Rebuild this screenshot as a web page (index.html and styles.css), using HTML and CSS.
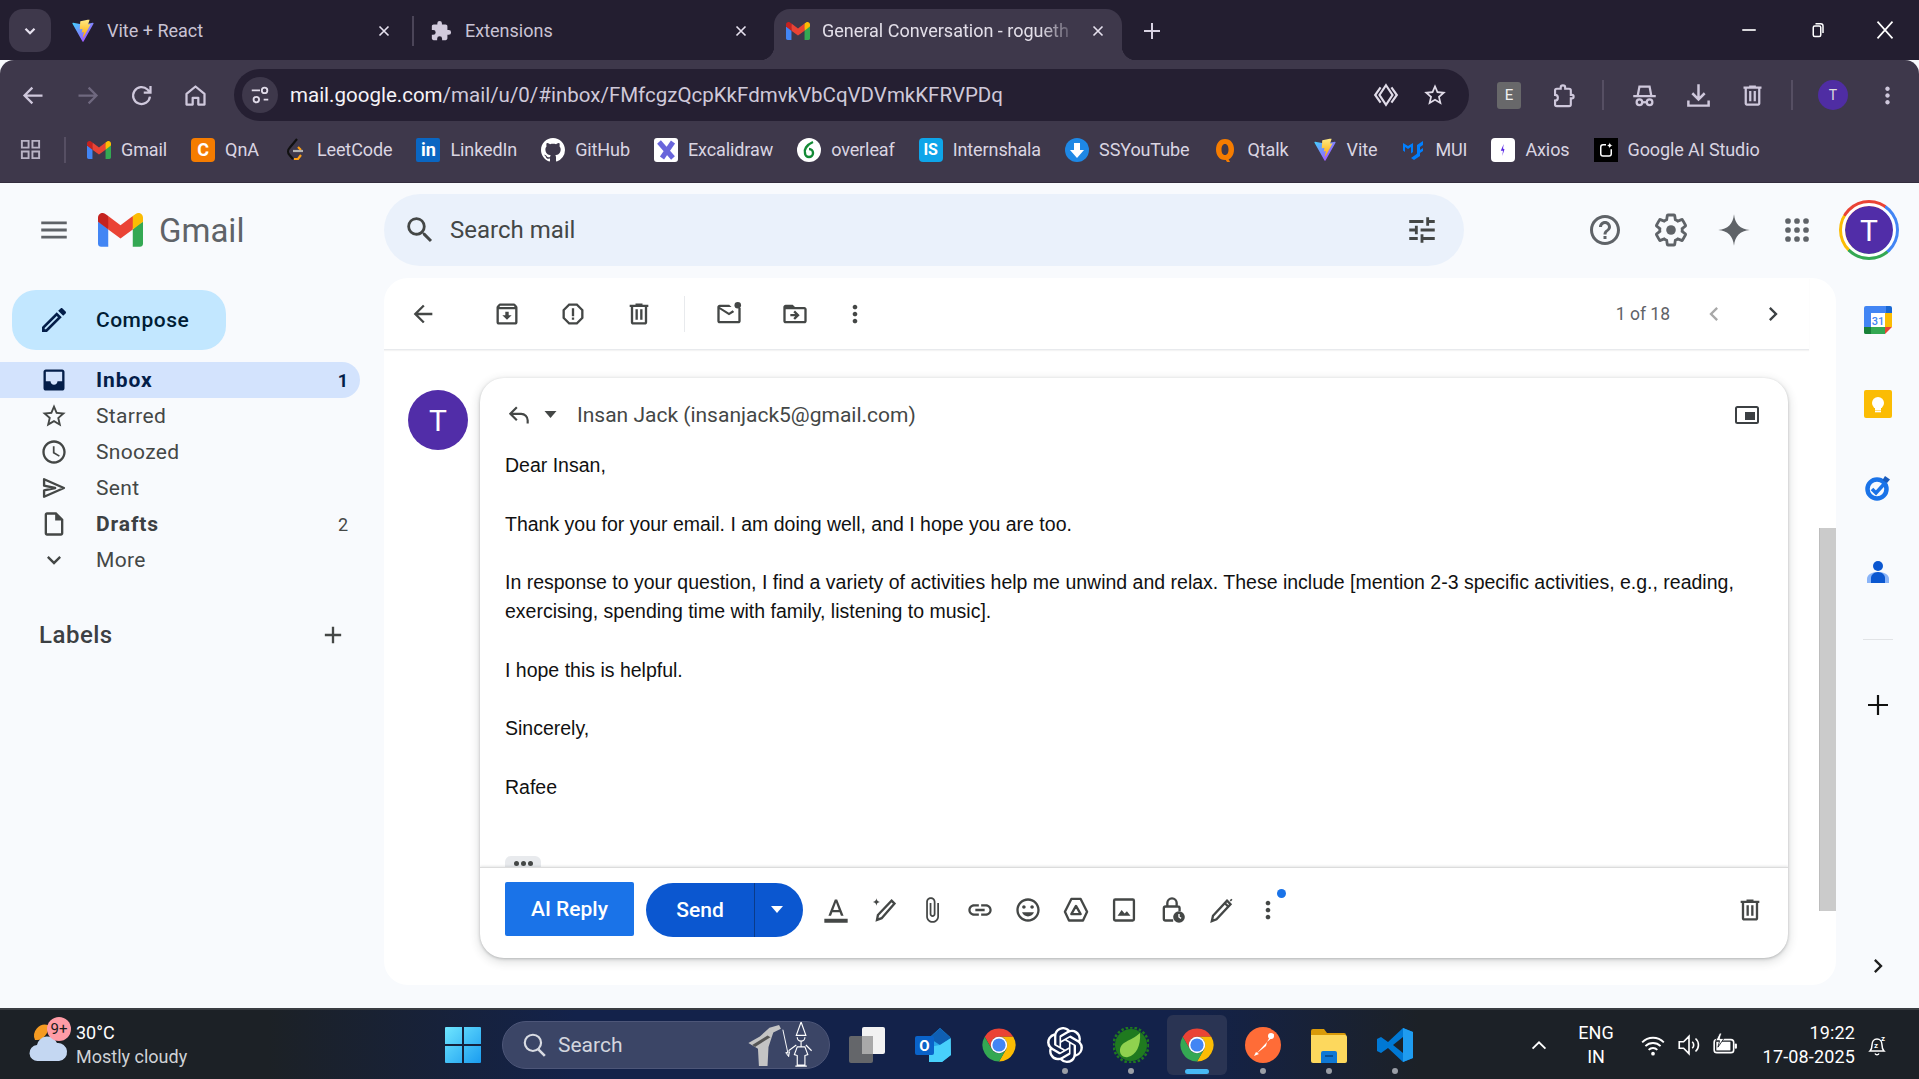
FILE: index.html
```html
<!DOCTYPE html>
<html lang="en">
<head>
<meta charset="utf-8">
<title>General Conversation</title>
<link rel="stylesheet" href="styles.css">
</head>
<body>
<svg class="sprite" width="0" height="0" aria-hidden="true">
  <defs>
    <linearGradient id="viteA" x1="0" y1="0" x2="1" y2="1"><stop offset="0" stop-color="#41d1ff"/><stop offset="1" stop-color="#bd34fe"/></linearGradient>
    <linearGradient id="viteB" x1="0" y1="0" x2="0" y2="1"><stop offset="0" stop-color="#ffea83"/><stop offset="1" stop-color="#ffa800"/></linearGradient>
    <linearGradient id="winG" x1="0" y1="0" x2="1" y2="1"><stop offset="0" stop-color="#6fe6ff"/><stop offset="1" stop-color="#1a9cf0"/></linearGradient>
    <symbol id="gm" viewBox="0 0 256 193">
      <path fill="#4285F4" d="M58.182 192.05V93.14L27.507 65.077 0 49.504v125.091c0 9.658 7.825 17.455 17.455 17.455h40.727Z"/>
      <path fill="#34A853" d="M197.818 192.05h40.727c9.659 0 17.455-7.826 17.455-17.455V49.505l-31.156 17.837-27.026 25.798v98.91Z"/>
      <path fill="#EA4335" d="m58.182 93.14-4.174-38.647 4.174-36.989L128 69.868l69.818-52.364 4.669 34.992-4.669 40.644L128 145.504z"/>
      <path fill="#FBBC04" d="M197.818 17.504V93.14L256 49.504V26.231c0-21.585-24.64-33.89-41.89-20.945l-16.292 12.218Z"/>
      <path fill="#C5221F" d="m0 49.504 26.759 20.07L58.182 93.14V17.504L41.89 5.286C24.61-7.66 0 4.646 0 26.23v23.273Z"/>
    </symbol>
    <symbol id="vite" viewBox="0 0 32 32">
      <path fill="url(#viteA)" d="M30 6.2 16.7 30a.8.8 0 0 1-1.4 0L2 6.2a.8.8 0 0 1 .8-1.1l12.9 2.3h.5l12.9-2.3A.8.8 0 0 1 30 6.2z"/>
      <path fill="url(#viteB)" d="M22.3 1.1 12.6 3a.4.4 0 0 0-.3.3l-.6 10.1c0 .3.2.5.4.4l2.7-.6c.3-.1.5.2.4.4l-.8 3.9c-.1.3.2.5.5.4l1.7-.5c.3-.1.5.2.5.5l-1.3 6.2c-.1.4.4.6.6.3l.2-.2 9.6-17.3-2.9.6c-.3 0-.5-.2-.4-.5l1.8-5.5c.1-.3-.1-.5-.4-.4z"/>
    </symbol>
    <symbol id="chrome" viewBox="0 0 24 24">
      <path fill="#ea4335" d="M12 6.5H21.53A11 11 0 0 0 2.47 6.5L7.24 14.75A5.5 5.5 0 0 1 12 6.5z"/>
      <path fill="#fbbc04" d="M21.53 6.5H12A5.5 5.5 0 0 1 16.76 14.75L12 23A11 11 0 0 0 21.53 6.5z"/>
      <path fill="#34a853" d="M2.47 6.5 7.24 14.75A5.5 5.5 0 0 0 16.76 14.75L12 23A11 11 0 0 1 2.47 6.5z"/>
      <circle cx="12" cy="12" r="5.5" fill="#fff"/><circle cx="12" cy="12" r="4.4" fill="#4285f4"/>
    </symbol>
    <symbol id="more" viewBox="0 0 24 24"><path d="M12 8c1.1 0 2-.9 2-2s-.9-2-2-2-2 .9-2 2 .9 2 2 2zm0 2c-1.1 0-2 .9-2 2s.9 2 2 2 2-.9 2-2-.9-2-2-2zm0 6c-1.1 0-2 .9-2 2s.9 2 2 2 2-.9 2-2-.9-2-2-2z"/></symbol>
    <symbol id="trash" viewBox="0 0 24 24"><path d="M15 4V3H9v1H4v2h1v13c0 1.1.9 2 2 2h10c1.1 0 2-.9 2-2V6h1V4h-5zm2 15H7V6h10v13zM9 8h2v9H9zm4 0h2v9h-2z"/></symbol>
    <symbol id="x" viewBox="0 0 24 24"><path d="M6 6l12 12M18 6 6 18" fill="none" stroke="currentColor" stroke-width="2.2"/></symbol>
  </defs>
</svg>

<div class="tabstrip">
  <button class="tablist"><svg class="i18" viewBox="0 0 24 24"><path d="M6 9l6 6 6-6" fill="none" stroke="currentColor" stroke-width="3"/></svg></button>
  <div class="tab tab-a">
    <svg class="fav"><use href="#vite"/></svg><span class="tab-title">Vite + React</span>
    <svg class="tab-x"><use href="#x"/></svg>
  </div>
  <i class="tab-sep"></i>
  <div class="tab tab-b">
    <svg class="fav puzzle" viewBox="0 0 24 24"><path d="M20.5 11H19V7c0-1.1-.9-2-2-2h-4V3.5a2.5 2.5 0 0 0-5 0V5H4c-1.1 0-2 .9-2 2v3.8h1.5a2.7 2.7 0 0 1 0 5.4H2V20c0 1.1.9 2 2 2h3.8v-1.5a2.7 2.7 0 0 1 5.4 0V22H17c1.1 0 2-.9 2-2v-4h1.5a2.5 2.5 0 0 0 0-5z"/></svg><span class="tab-title">Extensions</span>
    <svg class="tab-x"><use href="#x"/></svg>
  </div>
  <div class="tab tab-active">
    <svg class="fav"><use href="#gm"/></svg><span class="tab-title fade">General Conversation - rogueth</span>
    <svg class="tab-x"><use href="#x"/></svg>
  </div>
  <svg class="newtab" viewBox="0 0 24 24"><path d="M12 4v16M4 12h16" fill="none" stroke="currentColor" stroke-width="2"/></svg>
  <div class="winctl">
    <span class="wbtn"><svg class="i18" viewBox="0 0 24 24"><path d="M3 12h18" stroke="#fff" stroke-width="2.2"/></svg></span>
    <span class="wbtn"><svg class="i18" viewBox="0 0 24 24"><path d="M7 8.5a2 2 0 0 1 2-2h6a2 2 0 0 1 2 2v10a2 2 0 0 1-2 2H9a2 2 0 0 1-2-2z M10 3.500h7a3 3 0 0 1 3 3V16" fill="none" stroke="#fff" stroke-width="2"/></svg></span>
    <span class="wbtn"><svg class="i18 wx" viewBox="0 0 24 24"><path d="M3 2l18 20M21 2 3 22" fill="none" stroke="#fff" stroke-width="2"/></svg></span>
  </div>
</div>

<div class="chrome">
  <div class="navrow">
    <span class="cbtn"><svg class="ci" viewBox="0 0 24 24"><path d="M20 12H5M11 5l-7 7 7 7" fill="none" stroke="currentColor" stroke-width="2"/></svg></span>
    <span class="cbtn dim"><svg class="ci" viewBox="0 0 24 24"><path d="M4 12h15M13 5l7 7-7 7" fill="none" stroke="currentColor" stroke-width="2"/></svg></span>
    <span class="cbtn"><svg class="ci" viewBox="0 0 24 24"><path d="M19.500 13a7.500 7.500 0 1 1-2.200-6.300L20 9.500M20 3.500v6h-6" fill="none" stroke="currentColor" stroke-width="2"/></svg></span>
    <span class="cbtn"><svg class="ci" viewBox="0 0 24 24"><path d="M4 10.500 12 4l8 6.500V20h-5.500v-6h-5v6H4z" fill="none" stroke="currentColor" stroke-width="2" stroke-linejoin="round"/></svg></span>
    <div class="omni">
      <span class="omni-site"><svg class="i22" viewBox="0 0 24 24"><path d="M3 7h9M16 17h5" fill="none" stroke="currentColor" stroke-width="2"/><circle cx="17" cy="7" r="3" fill="none" stroke="currentColor" stroke-width="2"/><circle cx="8" cy="17" r="3" fill="none" stroke="currentColor" stroke-width="2"/></svg></span>
      <span class="url"><b>mail.google.com</b>/mail/u/0/#inbox/FMfcgzQcpKkFdmvkVbCqVDVmkKFRVPDq</span>
      <svg class="omni-lens" viewBox="0 0 24 24"><path d="M12 3l6 9-6 9-6-9z M7 5 2 12l5 7 M17 5l5 7-5 7" fill="none" stroke="currentColor" stroke-width="2"/></svg>
      <svg class="omni-star" viewBox="0 0 24 24"><path d="M22 9.240l-7.190-.62L12 2 9.190 8.630 2 9.240l5.460 4.730L5.820 21 12 17.270 18.180 21l-1.630-7.030L22 9.240zM12 15.400l-3.760 2.270 1-4.280-3.320-2.880 4.380-.38L12 6.100l1.710 4.040 4.380.38-3.320 2.880 1 4.280L12 15.400z"/></svg>
    </div>
    <span class="cbtn c-first"><span class="ext-e">E</span></span>
    <span class="cbtn"><svg class="ci" viewBox="0 0 24 24"><path d="M6 6h3.500V5a2 2 0 0 1 4 0v1H17a1.500 1.500 0 0 1 1.500 1.500v4h1a1.500 1.500 0 0 1 0 3h-1V20a1.500 1.500 0 0 1-1.500 1.500H6A1.500 1.500 0 0 1 4.500 20v-3.500a2.500 2.500 0 0 0 0-5V7.500A1.500 1.500 0 0 1 6 6z" fill="none" stroke="currentColor" stroke-width="1.900"/></svg></span>
    <i class="csep"></i>
    <span class="cbtn"><svg class="ci" viewBox="0 0 24 24"><path d="M2 12.500h20M6 12l1.500-8h9l1.500 8" fill="none" stroke="currentColor" stroke-width="2"/><circle cx="7.500" cy="18" r="2.500" fill="none" stroke="currentColor" stroke-width="2"/><circle cx="16.500" cy="18" r="2.500" fill="none" stroke="currentColor" stroke-width="2"/><path d="M10 18h4" stroke="currentColor" stroke-width="2"/></svg></span>
    <span class="cbtn"><svg class="ci" viewBox="0 0 24 24"><path d="M12 2v13M6.500 10l5.500 5.500 5.500-5.500M3 16.500V21h18v-4.500" fill="none" stroke="currentColor" stroke-width="2.200"/></svg></span>
    <span class="cbtn"><svg class="ci fillc"><use href="#trash"/></svg></span>
    <i class="csep"></i>
    <span class="cbtn"><span class="cavatar">T</span></span>
    <span class="cbtn"><svg class="ci fillc"><use href="#more"/></svg></span>
  </div>
  <div class="bookmarks">
    <svg class="bm-apps" viewBox="0 0 24 24"><path d="M3 3h7v7H3zM14 3h7v7h-7zM3 14h7v7H3zM14 14h7v7h-7z" fill="none" stroke="currentColor" stroke-width="2"/></svg>
    <i class="bm-sep"></i>
    <a class="bm"><svg class="bm-ic gm-small"><use href="#gm"/></svg>Gmail</a>
    <a class="bm"><span class="bm-ic tile t-orange">C</span>QnA</a>
    <a class="bm"><svg class="bm-ic" viewBox="0 0 24 24"><path d="M14 1 6.500 10a5 5 0 0 0 0 7l3.500 4" fill="none" stroke="#111" stroke-width="2.200"/><path d="M15 9l3 3M18 17l-3 4h-4" fill="none" stroke="#ffa116" stroke-width="2.200"/><path d="M10 13h10" stroke="#b3b3b3" stroke-width="2.200"/></svg>LeetCode</a>
    <a class="bm"><span class="bm-ic tile t-li">in</span>LinkedIn</a>
    <a class="bm"><svg class="bm-ic" viewBox="0 0 16 16"><path fill="#fff" d="M8 0C3.580 0 0 3.580 0 8c0 3.540 2.290 6.530 5.470 7.590.4.070.55-.17.55-.38 0-.19-.01-.82-.01-1.490-2.010.37-2.530-.49-2.690-.94-.09-.23-.48-.94-.82-1.130-.28-.15-.68-.52-.01-.53.63-.01 1.080.58 1.230.82.72 1.210 1.870.87 2.330.66.07-.52.28-.87.51-1.070-1.780-.2-3.640-.89-3.640-3.950 0-.87.31-1.590.82-2.150-.08-.2-.36-1.020.08-2.120 0 0 .67-.21 2.200.82.64-.18 1.320-.27 2-.27s1.360.09 2 .27c1.530-1.040 2.200-.82 2.200-.82.44 1.100.16 1.920.08 2.120.51.56.82 1.270.82 2.150 0 3.070-1.870 3.750-3.650 3.950.29.25.54.73.54 1.480 0 1.070-.01 1.930-.01 2.200 0 .21.15.46.55.38A8.013 8.013 0 0 0 16 8c0-4.420-3.580-8-8-8z"/></svg>GitHub</a>
    <a class="bm"><svg class="bm-ic" viewBox="0 0 24 24"><rect width="24" height="24" rx="3" fill="#fff"/><path d="M5 4l14 16M19 4 8 20" fill="none" stroke="#6965db" stroke-width="5"/></svg>Excalidraw</a>
    <a class="bm"><svg class="bm-ic" viewBox="0 0 24 24"><circle cx="12" cy="12" r="12" fill="#fff"/><path d="M16 4C9 7 7 12 8 15a4 4 0 1 0 4-4" fill="none" stroke="#138a36" stroke-width="2.400"/></svg>overleaf</a>
    <a class="bm"><span class="bm-ic tile t-is">IS</span>Internshala</a>
    <a class="bm"><svg class="bm-ic" viewBox="0 0 24 24"><circle cx="12" cy="12" r="12" fill="#1e88e5"/><path d="M9 5h6v7h4l-7 8-7-8h4z" fill="#fff"/></svg>SSYouTube</a>
    <a class="bm"><svg class="bm-ic" viewBox="0 0 24 24"><path d="M12 1c6 0 9 5 9 10.500S18 22 12 22 3 17 3 11.500 6 1 12 1zm0 5c-2.500 0-3.500 2.500-3.500 5.500S9.500 17 12 17s3.500-2.500 3.500-5.500S14.500 6 12 6z" fill="#f57c00"/><path d="M11 19l3 5h3l-3-6z" fill="#f57c00"/></svg>Qtalk</a>
    <a class="bm"><svg class="bm-ic"><use href="#vite"/></svg>Vite</a>
    <a class="bm"><svg class="bm-ic" viewBox="0 0 24 24"><path d="M2 5l5 3 5-3v9l-2 1.500V9L7 11 4 9v5L2 12.500zM22 3v4l-3 2v9l-6 4-3-2 5-3.500 1-1V7l6-4zM22 10v3l-3 2v-3z" fill="#007fff"/></svg>MUI</a>
    <a class="bm"><span class="bm-ic tile t-ax"><svg class="i18" viewBox="0 0 24 24"><path d="M13 4 9 13h3l-1 7 3-9-2-1z" fill="#5a29e4"/></svg></span>Axios</a>
    <a class="bm"><span class="bm-ic tile t-ai"><svg class="i18" viewBox="0 0 24 24"><path d="M12 5H8a3 3 0 0 0-3 3v9a3 3 0 0 0 3 3h8a3 3 0 0 0 3-3v-6" fill="none" stroke="#fff" stroke-width="2"/><path d="M17 2c.3 2.500 1.500 3.700 4 4-2.500.3-3.700 1.500-4 4-.3-2.500-1.500-3.700-4-4 2.500-.3 3.700-1.500 4-4z" fill="#fff"/></svg></span>Google AI Studio</a>
  </div>
</div>

<div class="gmail">
  <header class="g-head">
    <div class="brand">
      <svg class="g-ic menu" viewBox="0 0 24 24"><path d="M3 18h18v-2H3v2zm0-5h18v-2H3v2zm0-7v2h18V6H3z"/></svg>
      <svg class="logo"><use href="#gm"/></svg>
      <span class="wordmark">Gmail</span>
    </div>
    <div class="search">
      <svg class="g-ic search-ic" viewBox="0 0 24 24"><path d="M15.500 14h-.79l-.28-.27A6.471 6.471 0 0 0 16 9.500 6.500 6.500 0 1 0 9.500 16c1.610 0 3.090-.59 4.230-1.570l.27.28v.79l5 4.990L20.490 19l-4.990-5zm-6 0C7.010 14 5 11.990 5 9.500S7.010 5 9.500 5 14 7.010 14 9.500 11.990 14 9.500 14z"/></svg>
      <span class="search-text">Search mail</span>
      <svg class="g-ic tune" viewBox="0 0 24 24"><path d="M3 17v2h6v-2H3zM3 5v2h10V5H3zm10 16v-2h8v-2h-8v-2h-2v6h2zM7 9v2H3v2h4v2h2V9H7zm14 4v-2H11v2h10zm-6-4h2V7h4V5h-4V3h-2v6z"/></svg>
    </div>
    <div class="head-actions">
      <svg class="ha" viewBox="0 0 24 24"><path d="M11 18h2v-2h-2v2zm1-16C6.480 2 2 6.480 2 12s4.480 10 10 10 10-4.480 10-10S17.520 2 12 2zm0 18c-4.410 0-8-3.590-8-8s3.590-8 8-8 8 3.590 8 8-3.590 8-8 8zm0-14c-2.210 0-4 1.790-4 4h2c0-1.100.9-2 2-2s2 .9 2 2c0 2-3 1.750-3 5h2c0-2.250 3-2.500 3-5 0-2.210-1.790-4-4-4z"/></svg>
      <svg class="ha" viewBox="0 0 24 24"><path fill="none" stroke="currentColor" stroke-width="1.900" d="M19.430 12.980c.04-.32.07-.64.07-.98s-.03-.66-.07-.98l2.110-1.650c.19-.15.24-.42.12-.64l-2-3.460c-.12-.22-.39-.3-.61-.22l-2.490 1c-.52-.4-1.080-.73-1.690-.98l-.38-2.650C14.460 2.180 14.250 2 14 2h-4c-.25 0-.46.18-.49.420l-.38 2.650c-.61.25-1.170.59-1.690.98l-2.490-1c-.23-.09-.49 0-.61.22l-2 3.460c-.13.22-.07.49.12.64l2.110 1.650c-.04.32-.07.65-.07.98s.03.66.07.98l-2.110 1.650c-.19.15-.24.42-.12.64l2 3.460c.12.22.39.3.61.22l2.490-1c.52.4 1.080.73 1.690.98l.38 2.650c.03.24.24.42.49.42h4c.25 0 .46-.18.49-.42l.38-2.650c.61-.25 1.170-.59 1.690-.98l2.490 1c.23.09.49 0 .61-.22l2-3.460c.12-.22.07-.49-.12-.64l-2.110-1.650z"/><circle cx="12" cy="12" r="3.200"/></svg>
      <svg class="ha" viewBox="0 0 24 24"><path d="M12 1.500C12.700 8 16 11.300 22.500 12 16 12.700 12.700 16 12 22.500 11.300 16 8 12.700 1.500 12 8 11.300 11.300 8 12 1.500z"/></svg>
      <svg class="ha" viewBox="0 0 24 24"><g><circle cx="6" cy="6" r="1.900"/><circle cx="12" cy="6" r="1.900"/><circle cx="18" cy="6" r="1.900"/><circle cx="6" cy="12" r="1.900"/><circle cx="12" cy="12" r="1.900"/><circle cx="18" cy="12" r="1.900"/><circle cx="6" cy="18" r="1.900"/><circle cx="12" cy="18" r="1.900"/><circle cx="18" cy="18" r="1.900"/></g></svg>
      <div class="ring"><span class="ring-in">T</span></div>
    </div>
  </header>

  <div class="g-body">
    <aside class="side">
      <button class="compose"><svg class="g-ic compose-ic" viewBox="0 0 24 24"><path d="M3 17.250V21h3.750L17.810 9.940l-3.750-3.750L3 17.250zM5.920 19H5v-.92l9.060-9.060.92.92L5.920 19zM20.710 5.630l-2.340-2.340c-.2-.2-.45-.29-.71-.29s-.51.1-.7.29l-1.830 1.830 3.750 3.750 1.830-1.830c.39-.39.39-1.020 0-1.410z"/></svg>Compose</button>
      <nav class="nav">
        <a class="nav-row active"><svg class="g-ic" viewBox="0 0 24 24"><path d="M19 3H5c-1.100 0-2 .9-2 2v14c0 1.100.9 2 2 2h14c1.100 0 2-.9 2-2V5c0-1.100-.9-2-2-2zm0 10h-4c0 1.660-1.340 3-3 3s-3-1.340-3-3H5V5h14v8z"/></svg><span class="nav-label">Inbox</span><span class="count">1</span></a>
        <a class="nav-row"><svg class="g-ic" viewBox="0 0 24 24"><path d="M22 9.240l-7.190-.62L12 2 9.190 8.630 2 9.240l5.460 4.730L5.820 21 12 17.270 18.180 21l-1.630-7.030L22 9.240zM12 15.400l-3.760 2.270 1-4.280-3.320-2.880 4.380-.38L12 6.100l1.710 4.040 4.380.38-3.320 2.880 1 4.280L12 15.400z"/></svg><span class="nav-label">Starred</span></a>
        <a class="nav-row"><svg class="g-ic" viewBox="0 0 24 24"><path d="M11.990 2C6.470 2 2 6.480 2 12s4.470 10 9.990 10C17.520 22 22 17.520 22 12S17.520 2 11.990 2zM12 20c-4.420 0-8-3.580-8-8s3.580-8 8-8 8 3.580 8 8-3.580 8-8 8zm.5-13H11v6l5.250 3.150.75-1.230-4.500-2.670z"/></svg><span class="nav-label">Snoozed</span></a>
        <a class="nav-row"><svg class="g-ic" viewBox="0 0 24 24"><path d="M3.500 4.500 20.500 12 3.500 19.500V14L13 12 3.500 10z" fill="none" stroke="currentColor" stroke-width="2" stroke-linejoin="round"/></svg><span class="nav-label">Sent</span></a>
        <a class="nav-row strong"><svg class="g-ic" viewBox="0 0 24 24"><path d="M14 2H6c-1.100 0-2 .9-2 2v16c0 1.100.9 2 2 2h12c1.100 0 2-.9 2-2V8l-6-6zm4 18H6V4h7v5h5v11z"/></svg><span class="nav-label">Drafts</span><span class="count light">2</span></a>
        <a class="nav-row"><svg class="g-ic" viewBox="0 0 24 24"><path d="M16.590 8.590L12 13.170 7.410 8.590 6 10l6 6 6-6z"/></svg><span class="nav-label">More</span></a>
      </nav>
      <div class="labels"><span>Labels</span><svg class="g-ic" viewBox="0 0 24 24"><path d="M19 13h-6v6h-2v-6H5v-2h6V5h2v6h6v2z"/></svg></div>
    </aside>

    <main class="card">
      <div class="mail-tools">
        <span class="mt back"><svg class="t-ic" viewBox="0 0 24 24"><path d="M20 11H7.830l5.590-5.590L12 4l-8 8 8 8 1.410-1.410L7.830 13H20v-2z"/></svg></span>
        <span class="mt"><svg class="t-ic" viewBox="0 0 24 24"><path d="M20.540 5.230l-1.390-1.680C18.880 3.210 18.470 3 18 3H6c-.47 0-.88.21-1.160.55L3.460 5.230C3.170 5.570 3 6.020 3 6.500V19c0 1.100.9 2 2 2h14c1.100 0 2-.9 2-2V6.500c0-.48-.17-.93-.46-1.270zM6.240 5h11.520l.83 1H5.420l.82-1zM5 19V8h14v11H5zm8.450-9h-2.900v3H8l4 4 4-4h-2.550z"/></svg></span>
        <span class="mt"><svg class="t-ic" viewBox="0 0 24 24"><path d="M15.730 3H8.270L3 8.270v7.460L8.270 21h7.460L21 15.730V8.270L15.730 3zM19 14.900L14.900 19H9.100L5 14.900V9.100L9.100 5h5.800L19 9.100v5.800zM11 7h2v7h-2zm0 8h2v2h-2z"/></svg></span>
        <span class="mt"><svg class="t-ic"><use href="#trash"/></svg></span>
        <i class="mt-sep"></i>
        <span class="mt"><svg class="t-ic" viewBox="0 0 24 24"><path d="M20 6.830V18H4V8l8 5 4.500-2.810-1.400-1.400L12 11 4 6h10.170l-2-2H4c-1.100 0-2 .9-2 2v12c0 1.100.9 2 2 2h16c1.100 0 2-.9 2-2V6.830h-2z"/><circle cx="19.500" cy="4.500" r="2.800"/></svg></span>
        <span class="mt"><svg class="t-ic" viewBox="0 0 24 24"><path d="M20 6h-8l-2-2H4c-1.100 0-2 .9-2 2v12c0 1.100.9 2 2 2h16c1.100 0 2-.9 2-2V8c0-1.100-.9-2-2-2zm0 12H4V8h16v10zm-8.010-9l-1.410 1.410L12.160 12H8v2h4.160l-1.590 1.590L11.990 17 16 13.010 11.990 9z"/></svg></span>
        <span class="mt mt-more"><svg class="t-ic"><use href="#more"/></svg></span>
        <span class="pager">1 of 18</span>
        <svg class="t-ic pg-prev" viewBox="0 0 24 24"><path d="M15.410 7.410L14 6l-6 6 6 6 1.410-1.410L10.830 12z"/></svg>
        <svg class="t-ic pg-next" viewBox="0 0 24 24"><path d="M10 6L8.590 7.410 13.170 12l-4.580 4.590L10 18l6-6z"/></svg>
      </div>
      <div class="card-row">
        <div class="thread">
          <span class="msg-avatar">T</span>
          <section class="composer">
            <div class="reply-head">
              <svg class="rh-ic" viewBox="0 0 24 24"><path d="M20 19v-3c0-3.300-2.700-6-6-6H4M10 4l-6 6 6 6" fill="none" stroke="currentColor" stroke-width="2"/></svg>
              <svg class="rh-caret" viewBox="0 0 12 7"><path d="M0 0h12L6 7z"/></svg>
              <span class="rh-to">Insan Jack (insanjack5@gmail.com)</span>
              <svg class="rh-pop" viewBox="0 0 24 18"><rect x="1" y="1" width="22" height="16" rx="1.500" fill="none" stroke="currentColor" stroke-width="2"/><rect x="10" y="6" width="10" height="8"/></svg>
            </div>
            <div class="reply-body">
              <p>Dear Insan,</p>
              <p>Thank you for your email. I am doing well, and I hope you are too.</p>
              <p>In response to your question, I find a variety of activities help me unwind and relax. These include [mention 2-3 specific activities, e.g., reading, exercising, spending time with family, listening to music].</p>
              <p>I hope this is helpful.</p>
              <p>Sincerely,</p>
              <p>Rafee</p>
              <span class="trim"><i></i><i></i><i></i></span>
            </div>
            <div class="reply-foot">
              <button class="ai-btn">AI Reply</button>
              <button class="send-btn">Send</button><button class="send-more"><svg viewBox="0 0 12 7"><path d="M0 0h12L6 7z"/></svg></button>
              <span class="fi fi-first"><svg class="f-ic" viewBox="0 0 24 24"><path d="M11 3 5.500 17h2.250l1.120-3h6.250l1.120 3h2.250L13 3h-2zm-1.380 9L12 5.670 14.380 12H9.620zM2 19.500h20V23H2z"/></svg></span>
              <span class="fi"><svg class="f-ic" viewBox="0 0 24 24"><path d="M5.500 2c.3 2 1.200 2.900 3 3.200-1.800.3-2.700 1.200-3 3.200-.3-2-1.200-2.900-3-3.200 1.800-.3 2.700-1.200 3-3.200z"/><path d="M18.500 4 21 6.500 10 19l-4 1.500.8-4.200z" fill="none" stroke="currentColor" stroke-width="2"/></svg></span>
              <span class="fi"><svg class="f-ic" viewBox="0 0 24 24"><path d="M16.500 6v11.500c0 2.210-1.790 4-4 4s-4-1.790-4-4V5c0-1.380 1.120-2.500 2.500-2.500s2.500 1.120 2.500 2.500v10.500c0 .55-.45 1-1 1s-1-.45-1-1V6H10v9.500c0 1.380 1.120 2.500 2.500 2.500s2.500-1.120 2.500-2.500V5c0-2.210-1.790-4-4-4S7 2.790 7 5v12.500c0 3.040 2.460 5.500 5.500 5.500s5.500-2.460 5.500-5.500V6h-1.500z"/></svg></span>
              <span class="fi"><svg class="f-ic" viewBox="0 0 24 24"><path d="M3.900 12c0-1.710 1.390-3.100 3.100-3.100h4V7H7c-2.760 0-5 2.240-5 5s2.240 5 5 5h4v-1.900H7c-1.710 0-3.100-1.390-3.100-3.100zM8 13h8v-2H8v2zm9-6h-4v1.900h4c1.710 0 3.100 1.390 3.100 3.100s-1.390 3.100-3.100 3.100h-4V17h4c2.760 0 5-2.240 5-5s-2.240-5-5-5z"/></svg></span>
              <span class="fi"><svg class="f-ic" viewBox="0 0 24 24"><path d="M11.990 2C6.470 2 2 6.480 2 12s4.470 10 9.990 10C17.520 22 22 17.520 22 12S17.520 2 11.990 2zM12 20c-4.420 0-8-3.580-8-8s3.580-8 8-8 8 3.580 8 8-3.580 8-8 8zm3.500-9c.83 0 1.500-.67 1.500-1.500S16.330 8 15.500 8 14 8.670 14 9.500s.67 1.500 1.500 1.500zm-7 0c.83 0 1.500-.67 1.500-1.500S9.330 8 8.500 8 7 8.670 7 9.500 7.670 11 8.500 11zm3.500 6.500c2.330 0 4.310-1.460 5.110-3.500H6.890c.8 2.040 2.780 3.500 5.110 3.500z"/></svg></span>
              <span class="fi"><svg class="f-ic" viewBox="0 0 24 24"><path d="M8 2.500h8l5.500 11-3.500 7.500H6l-3.500-7.500z M12 8.500 16 15.500H8z" fill="none" stroke="currentColor" stroke-width="2" stroke-linejoin="round"/></svg></span>
              <span class="fi"><svg class="f-ic" viewBox="0 0 24 24"><rect x="3.500" y="3" width="17" height="18" rx="1" fill="none" stroke="currentColor" stroke-width="2"/><path d="M6.500 17l3.500-5 2.500 3 2-2 3 4z"/></svg></span>
              <span class="fi"><svg class="f-ic" viewBox="0 0 24 24"><path d="M8 9V6a4 4 0 0 1 8 0v3M13 21H6.500A1.500 1.500 0 0 1 5 19.500v-9A1.500 1.500 0 0 1 6.500 9h10.500a1.500 1.500 0 0 1 1.500 1.500V13" fill="none" stroke="currentColor" stroke-width="2"/><circle cx="18" cy="18" r="5"/><path d="M18 15.500V18l1.800 1.200" stroke="#fff" stroke-width="1.200" fill="none"/></svg></span>
              <span class="fi"><svg class="f-ic" viewBox="0 0 24 24"><path d="M18 4 21 7 9 20l-4 1.500 1-4.500zM16 6l3 3M21 3l1 1" fill="none" stroke="currentColor" stroke-width="2"/></svg></span>
              <span class="fi fi-dot"><svg class="f-ic"><use href="#more"/></svg><i class="blue-dot"></i></span>
              <span class="fi fi-trash"><svg class="f-ic"><use href="#trash"/></svg></span>
            </div>
          </section>
        </div>
        <div class="scroll"><i class="thumb"></i></div>
      </div>
    </main>

    <aside class="rail">
      <span class="rail-slot"><svg class="rail-ic" viewBox="0 0 28 28"><path fill="#4285f4" d="M2 0h20v7H7v14H0V2a2 2 0 0 1 2-2z"/><path fill="#1967d2" d="M22 0h4a2 2 0 0 1 2 2v5h-6z"/><path fill="#fbbc04" d="M21 7h7v14h-7z"/><path fill="#34a853" d="M7 21h14v7H2a2 2 0 0 1-2-2v-5z"/><path fill="#188038" d="M0 21h7v7H2a2 2 0 0 1-2-2z"/><path fill="#ea4335" d="M21 21h7l-7 7z"/><rect x="7" y="7" width="14" height="14" fill="#fff"/><text x="14" y="18.500" class="cal-num">31</text></svg></span>
      <span class="rail-slot"><svg class="rail-ic" viewBox="0 0 28 28"><rect width="28" height="28" rx="2" fill="#fbbc04"/><circle cx="14" cy="13" r="6" fill="#fff"/><rect x="11" y="18" width="6" height="2" fill="#fff"/><rect x="11" y="20.500" width="6" height="1.800" fill="#fff"/></svg></span>
      <span class="rail-slot"><svg class="rail-ic" viewBox="0 0 28 28"><circle cx="13" cy="15" r="9.500" fill="none" stroke="#1a73e8" stroke-width="4.500"/><path d="M8 15l4 4 9-10" fill="none" stroke="#1a73e8" stroke-width="3.600"/><path d="M21 2l5 3.500-3 3.500-4.500-3z" fill="#185abc"/></svg></span>
      <span class="rail-slot"><svg class="rail-ic" viewBox="0 0 28 28"><circle cx="14" cy="8" r="5" fill="#0b57d0"/><path d="M3 25v-4c0-4 4-7 11-7s11 3 11 7v4z" fill="#8ab4f8"/><path d="M7 25v-5c0-3 3-6 7-6s7 3 7 6v5z" fill="#0b57d0"/></svg></span>
      <i class="rail-sep"></i>
      <svg class="rail-plus" viewBox="0 0 24 24"><path d="M12 2v20M2 12h20" fill="none" stroke="#111" stroke-width="2.200"/></svg>
      <svg class="rail-chev" viewBox="0 0 24 24"><path d="M10 6L8.590 7.410 13.170 12l-4.580 4.590L10 18l6-6z"/></svg>
    </aside>
  </div>
</div>

<footer class="taskbar">
  <div class="weather">
    <div class="w-ic">
      <svg class="w-cloud" viewBox="0 0 40 42"><path d="M20 1a11 11 0 0 0-13 15c3 0 6 0 9-3 3-3 5-7 4-12z" fill="#f59b22"/><path d="M10 37a8 8 0 0 1-1-16 10.500 10.500 0 0 1 20-2 9 9 0 0 1 2 18z" fill="#c4d7f2"/></svg>
      <span class="w-badge">9+</span>
    </div>
    <div class="w-text"><span class="w-temp">30°C</span><span class="w-sum">Mostly cloudy</span></div>
  </div>
  <svg class="tb-win" viewBox="0 0 36 36"><path fill="url(#winG)" d="M1 0h16v17H0V1a1 1 0 0 1 1-1zM19 0h16a1 1 0 0 1 1 1v16H19zM0 19h17v17H1a1 1 0 0 1-1-1zM19 19h17v16a1 1 0 0 1-1 1H19z"/></svg>
  <div class="tb-search">
    <svg class="tb-lens" viewBox="0 0 24 24"><circle cx="11" cy="10" r="7.500" fill="none" stroke="currentColor" stroke-width="2"/><path d="M16 16l6 6" stroke="currentColor" stroke-width="2.400"/></svg>
    <span class="tb-search-text">Search</span>
    <svg class="tb-doodle" viewBox="0 0 70 48"><path d="M2 22 14 15l10-9 10-3 2 4-8 4-2 6-3 9-1 20H13l-1-18z" fill="#c4c4c4"/><path d="M6 24l16-10 3 2L9 26z" fill="#555"/><path d="M38 8l6 28M44 36l-3-4 4-1z" fill="none" stroke="#fff"/><path d="M52 14 57 0l5 14zM52 14h10M53 16a4 4 0 1 0 8 0M57 20v6M50 34l3-8h8l3 8-3 1v10h-8V35zM44 30l8-6M62 24l6 6M51 46h12" fill="none" stroke="#fff" stroke-width="1.200"/></svg>
  </div>
  <div class="apps">
    <span class="app"><svg class="app-ic" viewBox="0 0 36 36"><rect x="13" y="0" width="23" height="27" rx="2" fill="#f2f2f2"/><rect x="0" y="9" width="24" height="27" rx="2" fill="#6e6e6e" opacity=".9"/><rect x="13" y="9" width="11" height="18" fill="#a9a9a9"/></svg></span>
    <span class="app"><svg class="app-ic" viewBox="0 0 36 36"><path d="M14 11 25 1l10 9 1 18-9 7H14z" fill="#28a8ea"/><path d="M25 1l11 10-11 7-11-7z" fill="#0f5fb3"/><path d="M14 20l11-2 11-7v17l-9 7H14z" fill="#50d9ff" opacity=".8"/><rect x="0" y="9" width="19" height="19" rx="2" fill="#0a63c9"/><text x="9.500" y="24" class="ol">O</text></svg></span>
    <span class="app"><svg class="app-ic"><use href="#chrome"/></svg></span>
    <span class="app"><svg class="app-ic" viewBox="0 0 24 24"><path fill="#fff" d="M22.2819 9.8211a5.9847 5.9847 0 0 0-.5157-4.9108 6.0462 6.0462 0 0 0-6.5098-2.9A6.0651 6.0651 0 0 0 4.9807 4.1818a5.9847 5.9847 0 0 0-3.9977 2.9 6.0462 6.0462 0 0 0 .7427 7.0966 5.98 5.98 0 0 0 .511 4.9107 6.051 6.051 0 0 0 6.5146 2.9001A5.9847 5.9847 0 0 0 13.2599 24a6.0557 6.0557 0 0 0 5.7718-4.2058 5.9894 5.9894 0 0 0 3.9977-2.9001 6.0557 6.0557 0 0 0-.7475-7.0729zm-9.022 12.6081a4.4755 4.4755 0 0 1-2.8764-1.0408l.1419-.0804 4.7783-2.7582a.7948.7948 0 0 0 .3927-.6813v-6.7369l2.02 1.1686a.071.071 0 0 1 .038.052v5.5826a4.504 4.504 0 0 1-4.4945 4.4944zm-9.6607-4.1254a4.4708 4.4708 0 0 1-.5346-3.0137l.142.0852 4.783 2.7582a.7712.7712 0 0 0 .7806 0l5.8428-3.3685v2.3324a.0804.0804 0 0 1-.0332.0615L9.74 19.9502a4.4992 4.4992 0 0 1-6.1408-1.6464zM2.3408 7.8956a4.485 4.485 0 0 1 2.3655-1.9728V11.6a.7664.7664 0 0 0 .3879.6765l5.8144 3.3543-2.0201 1.1685a.0757.0757 0 0 1-.071 0l-4.8303-2.7865A4.504 4.504 0 0 1 2.3408 7.872zm16.5963 3.8558L13.1038 8.364 15.1192 7.2a.0757.0757 0 0 1 .071 0l4.8303 2.7913a4.4944 4.4944 0 0 1-.6765 8.1042v-5.6772a.79.79 0 0 0-.407-.667zm2.0107-3.0231l-.142-.0852-4.7735-2.7818a.7759.7759 0 0 0-.7854 0L9.409 9.2297V6.8974a.0662.0662 0 0 1 .0284-.0615l4.8303-2.7866a4.4992 4.4992 0 0 1 6.6802 4.66zM8.3065 12.863l-2.02-1.1638a.0804.0804 0 0 1-.038-.0567V6.0742a4.4992 4.4992 0 0 1 7.3757-3.4537l-.142.0805L8.704 5.459a.7948.7948 0 0 0-.3927.6813zm1.0976-2.3654l2.602-1.4998 2.6069 1.4998v2.9994l-2.5974 1.4997-2.6067-1.4997Z"/></svg></span>
    <span class="app"><svg class="app-ic" viewBox="0 0 36 36"><circle cx="18" cy="18" r="16" fill="#1f7a1f"/><circle cx="18" cy="18" r="17.500" fill="none" stroke="#1f7a1f" stroke-width="2.500" stroke-dasharray="2.500 2"/><path d="M27 6c1 13-4 22-12 24-4 1-8-2-8-6 0-10 10-9 20-18z" fill="#8fd14f"/></svg></span>
    <span class="app app-active"><svg class="app-ic"><use href="#chrome"/></svg><i class="active-bar"></i></span>
    <span class="app"><svg class="app-ic" viewBox="0 0 36 36"><circle cx="18" cy="18" r="18" fill="#ff6c37"/><path d="M11 27 22 15l4-7 3-1-1 3-6 5-1 4z" fill="#fff"/><circle cx="26" cy="9" r="3" fill="#fff"/><path d="M9 29l5-2-3-2z" fill="#fff"/></svg></span>
    <span class="app"><svg class="app-ic" viewBox="0 0 36 36"><path d="M0 4a2 2 0 0 1 2-2h11l3 4h17a2 2 0 0 1 2 2v4H0z" fill="#d99a09"/><path d="M0 8h34a2 2 0 0 1 2 2v24a2 2 0 0 1-2 2H2a2 2 0 0 1-2-2z" fill="#fdd85d"/><path d="M10 26a2 2 0 0 1 2-2h12a2 2 0 0 1 2 2v10H10z" fill="#0f78d4"/><rect x="14" y="28" width="8" height="2" fill="#0a4f92"/></svg></span>
    <span class="app"><svg class="app-ic" viewBox="0 0 36 36"><path d="M26 1 36 5v26l-10 4L11 21l-7 5-4-2V12l4-2 7 5z" fill="#0078d4"/><path d="M26 1 36 5v26l-10 4z" fill="#1f9cf0"/><path d="M26 10v16l-10-8z" fill="#1c2127"/></svg></span>
  </div>
  <div class="tray">
    <svg class="tr-up" viewBox="0 0 24 24"><path d="M5 16l7-7 7 7" fill="none" stroke="currentColor" stroke-width="2"/></svg>
    <div class="tr-lang"><span>ENG</span><span>IN</span></div>
    <svg class="tr-ic wifi" viewBox="0 0 24 24"><path d="M2 9.500a14 14 0 0 1 20 0M5 13a10 10 0 0 1 14 0M8 16.500a5.500 5.500 0 0 1 8 0" fill="none" stroke="currentColor" stroke-width="1.700"/><circle cx="12" cy="20" r="1.700"/></svg>
    <svg class="tr-ic vol" viewBox="0 0 24 24"><path d="M3 9h4l5-5v16l-5-5H3zM15 9a4 4 0 0 1 0 6M18 6a8 8 0 0 1 0 12" fill="none" stroke="currentColor" stroke-width="1.500"/></svg>
    <svg class="tr-ic batt" viewBox="0 0 24 24"><rect x="2" y="7" width="18" height="12" rx="2.500" fill="none" stroke="currentColor" stroke-width="1.500"/><rect x="4" y="9" width="13" height="8"/><rect x="21" y="10.500" width="2" height="5" rx="1"/><path d="M7 1 3.500 8H7l-1.500 6L11 6H7.500L9 1z" stroke="#1c2127" stroke-width=".8"/></svg>
    <div class="tr-clock"><span>19:22</span><span>17-08-2025</span></div>
    <svg class="tr-bell" viewBox="0 0 24 24"><path d="M5 18c1.500-1.500 2-3 2-6 0-3.500 2-6 5-6s5 2.500 5 6c0 3 .5 4.500 2 6zM10 20.500a2.200 2.200 0 0 0 4 0" fill="none" stroke="currentColor" stroke-width="1.500"/><text x="9" y="15" class="zz">z</text><text x="16" y="8" class="zz">z</text></svg>
  </div>
</footer>
</body>
</html>
```
FILE: styles.css
```css
* { box-sizing: border-box; }
html, body { margin: 0; height: 100%; }
body {
  width: 1919px; height: 1079px; overflow: hidden;
  display: flex; flex-direction: column;
  background: #f8fafd;
  font-family: Roboto, "Liberation Sans", sans-serif;
}
.sprite { position: absolute; }
button { border: 0; font-family: inherit; padding: 0; }
i { font-style: normal; display: block; }
svg { display: block; flex: none; fill: currentColor; }
.i18 { width: 18px; height: 18px; }
.i22 { width: 22px; height: 22px; }

/* tab strip */
.tabstrip { height: 60px; flex: none; background: #231e30; display: flex; align-items: flex-start; padding-top: 9px; padding-left: 9px; color: #d8d2e2; }
.tablist { width: 42px; height: 43px; border-radius: 14px; background: #3e384b; color: #e6e1ee; display: flex; align-items: center; justify-content: center; margin-right: 7px; }
.tab { height: 51px; display: flex; align-items: center; font-size: 18px; }
.tab-a { width: 354px; padding: 0 16px 8px 13px; }
.tab-sep { width: 2px; height: 30px; background: #4b4558; margin: 7px 3px 0 0; }
.tab-b { width: 357px; padding: 0 21px 8px 13px; }
.tab-active { width: 348px; padding: 0 12px 8px; background: #3e384b; border-radius: 16px 16px 0 0; position: relative; color: #e8e4ef; }
.tab-active::before, .tab-active::after { content: ""; position: absolute; bottom: 0; width: 14px; height: 14px; }
.tab-active::before { left: -14px; background: radial-gradient(circle at 0 0, transparent 14px, #3e384b 14.5px); }
.tab-active::after { right: -14px; background: radial-gradient(circle at 100% 0, transparent 14px, #3e384b 14.5px); }
.fav { width: 24px; height: 24px; margin-right: 12px; }
.puzzle { color: #d2cbdd; width: 22px; height: 24px; margin-right: 13px; }
.tab-title { flex: 1; white-space: nowrap; color: #c9c3d4; }
.tab-active .tab-title { color: #e3dfe9; }
.fade { -webkit-mask-image: linear-gradient(90deg, #000 85%, transparent 100%); mask-image: linear-gradient(90deg, #000 85%, transparent 100%); flex: none; width: 256px; margin-right: 8px; }
.tab-x { width: 24px; height: 24px; padding: 3px; margin-left: 0; color: #e6e1ee; }
.newtab { width: 24px; height: 24px; margin: 10px 0 0 18px; color: #d8d2e2; }
.winctl { margin-left: auto; display: flex; }
.wbtn { width: 68px; height: 26px; margin-top: 8px; display: flex; align-items: center; justify-content: center; }
.wx { width: 20px; height: 20px; }

/* browser toolbar */
.chrome { flex: none; height: 123px; background: #3e384b; border-radius: 14px 14px 0 0; border-bottom: 1px solid #332d3e; color: #cfc8dc; position: relative; }
.navrow { height: 70px; display: flex; align-items: center; padding: 0 0 0 6px; }
.cbtn { width: 54px; height: 40px; display: flex; align-items: center; justify-content: center; }
.cbtn.dim { color: #6f687f; }
.c-first { margin-left: 13px; }
.ci { width: 27px; height: 27px; }
.fillc { color: #cfc8dc; }
.omni { width: 1235px; height: 52px; margin-left: 12px; background: #251f32; border-radius: 26px; display: flex; align-items: center; padding: 0 13px 0 8px; }
.omni-site { width: 36px; height: 36px; border-radius: 50%; background: #3e384b; display: flex; align-items: center; justify-content: center; color: #e1dce9; margin-right: 12px; }
.url { flex: 1; font-size: 20.500px; color: #cfc9d9; white-space: nowrap; }
.url b { font-weight: 400; color: #f5f3f8; }
.omni-lens { width: 26px; height: 26px; margin-right: 23px; color: #e1dce9; }
.omni-star { width: 26px; height: 26px; margin-right: 8px; color: #e1dce9; }
.ext-e { width: 24px; height: 27px; background: #68686a; border-radius: 3px; color: #f0f0f0; font-size: 15px; display: flex; align-items: center; justify-content: center; }
.csep { width: 2px; height: 30px; background: #564f63; margin: 0 13px 0 12px; }
.cavatar { width: 30px; height: 30px; background: #4f2da3; border-radius: 50%; color: #ddd; font-size: 14px; display: flex; align-items: center; justify-content: center; }

.bookmarks { height: 39px; display: flex; align-items: center; padding-left: 19px; font-size: 18px; color: #dad5e2; }
.bm-apps { width: 23px; height: 23px; color: #b9b3c5; }
.bm-sep { width: 2px; height: 26px; background: #564f63; margin: 0 21px 0 22px; }
.bm { display: flex; align-items: center; gap: 10px; margin-right: 24px; white-space: nowrap; letter-spacing: -.1px; }
.bm-ic { width: 24px; height: 24px; }
.gm-small { height: 22px; }
.tile { display: flex; align-items: center; justify-content: center; border-radius: 4px; font-weight: 700; color: #fff; font-size: 16px; flex: none; }
.t-orange { background: #f57c00; font-size: 18px; }
.t-li { background: #0a66c2; border-radius: 2px; font-size: 18px; }
.t-is { background: #0ea5e9; font-size: 16px; }
.t-ax { background: #fff; }
.t-ai { background: #000; border-radius: 0; }

/* gmail */
.gmail { flex: 1; display: flex; flex-direction: column; min-height: 0; }
.g-head { height: 95px; flex: none; display: flex; align-items: center; padding-bottom: 1px; }
.brand { width: 384px; display: flex; align-items: center; padding-left: 37px; }
.g-ic { width: 28px; height: 28px; color: #444746; }
.menu { width: 34px; height: 34px; color: #5f6368; }
.logo { width: 45px; height: 34px; margin: 0 0 0 27px; }
.wordmark { font-size: 33px; color: #5f6368; margin-left: 16px; }
.search { width: 1080px; height: 72px; background: #eaf1fb; border-radius: 36px; display: flex; align-items: center; padding: 0 25px 0 19px; }
.search-ic { width: 34px; height: 34px; }
.search-text { flex: 1; font-size: 24px; color: #444746; margin-left: 13px; }
.tune { width: 34px; height: 34px; }
.head-actions { flex: 1; display: flex; align-items: center; padding-left: 123px; color: #5f6368; }
.ha { width: 36px; height: 36px; margin-right: 27px; color: #5f6368; }
.ha:nth-child(1) { margin-right: 30px; }
.ha:nth-child(2) { margin-right: 27px; }
.ring { width: 60px; height: 60px; border-radius: 50%; background: conic-gradient(from 35deg, #4285f4 0 105deg, #34a853 105deg 190deg, #fbbc04 190deg 265deg, #ea4335 265deg 360deg); display: flex; align-items: center; justify-content: center; margin-left: -3px; flex: none; }
.ring-in { width: 54px; height: 54px; border-radius: 50%; background: #512da8; border: 3px solid #fff; background-clip: padding-box; color: #fff; font-size: 30px; display: flex; align-items: center; justify-content: center; }

.g-body { flex: 1; display: flex; min-height: 0; }
.side { width: 384px; flex: none; padding-top: 12px; }
.compose { display: flex; align-items: center; width: 214px; height: 60px; margin-left: 12px; background: #c2e7ff; border-radius: 24px; font-size: 21px; font-weight: 500; letter-spacing: .5px; color: #001d35; padding-left: 26px; }
.compose-ic { color: #041e49; width: 32px; height: 32px; margin-right: 26px; }
.nav { margin-top: 12px; width: 360px; }
.nav-row { height: 36px; display: flex; align-items: center; padding: 0 12px 0 40px; font-size: 21px; letter-spacing: .35px; color: #444746; border-radius: 0 18px 18px 0; }
.nav-row.active { background: #d3e3fd; color: #041e49; font-weight: 700; letter-spacing: .9px; }
.nav-row.active .g-ic { color: #041e49; }
.nav-row.strong { font-weight: 700; color: #3c4043; letter-spacing: .9px; }
.nav-label { margin-left: 28px; flex: 1; }
.count { font-size: 18px; letter-spacing: 0; }
.count.light { font-weight: 400; color: #444746; }
.labels { display: flex; align-items: center; justify-content: space-between; margin-top: 43px; width: 360px; padding: 0 13px 0 39px; font-size: 24px; font-weight: 500; letter-spacing: .5px; color: #3c4043; }

.card { width: 1452px; flex: none; height: 707px; background: #fff; border-radius: 24px; display: flex; flex-direction: column; overflow: hidden; }
.mail-tools { height: 72px; flex: none; margin-right: 27px; border-bottom: 1px solid #e8eaed; box-shadow: 0 1px 1px rgba(60,64,67,.06); display: flex; align-items: center; padding-left: 6px; color: #444746; }
.mt { width: 66px; height: 48px; display: flex; align-items: center; justify-content: center; }
.back { margin-right: 18px; }
.t-ic { width: 28px; height: 28px; color: #444746; }
.mt-sep { width: 1px; height: 36px; background: #e8eaed; margin: 0 11px 0 12px; }
.mt-more { margin-left: -6px; }
.pager { margin-left: auto; font-size: 17.500px; color: #5f6368; margin-right: 30px; }
.pg-prev { color: #a8a8a8; margin-right: 31px; }
.pg-next { margin-right: 22px; color: #3c4043; }

.card-row { flex: 1; display: flex; min-height: 0; }
.thread { flex: 1; display: flex; align-items: flex-start; gap: 12px; padding: 28px 0 0 24px; }
.msg-avatar { width: 60px; height: 60px; margin-top: 12px; border-radius: 50%; background: #512da8; color: #fff; font-size: 30px; display: flex; align-items: center; justify-content: center; flex: none; }
.composer { width: 1308px; height: 580px; background: #fff; border-radius: 24px; box-shadow: 0 1px 3px rgba(60,64,67,.3), 0 3px 8px 2px rgba(60,64,67,.14); display: flex; flex-direction: column; overflow: hidden; }
.reply-head { height: 73px; flex: none; display: flex; align-items: center; padding: 0 29px 0 26px; color: #444746; }
.rh-ic { width: 26px; height: 26px; transform: translateY(1px); }
.rh-caret { width: 13px; height: 7px; margin-left: 12px; }
.rh-to { flex: 1; margin-left: 20px; font-size: 21px; color: #444746; }
.rh-pop { width: 24px; height: 18px; color: #3c4043; }
.reply-body { flex: 1; min-height: 0; padding: 0 25px; display: flex; flex-direction: column; font-family: "Liberation Sans", Arial, sans-serif; font-size: 19.5px; line-height: 29.25px; color: #111; }
.reply-body p { margin: 0 0 29.25px; }
.trim { margin-top: auto; width: 36px; height: 11px; flex: none; background: #e8eaed; border-radius: 6px 6px 0 0; display: flex; justify-content: center; align-items: flex-end; gap: 2px; padding-bottom: 1px; }
.trim i { width: 5px; height: 5px; background: #444746; border-radius: 50%; }
.reply-foot { height: 91px; flex: none; border-top: 1px solid #dcdcdc; box-shadow: 0 -1px 2px rgba(60,64,67,.12); display: flex; align-items: center; padding: 0 14px 7px 25px; }
.ai-btn { width: 129px; height: 54px; background: #1a73e8; color: #fff; font-size: 21px; font-weight: 500; border-radius: 2px; margin-right: 12px; transform: translateY(-1px); }
.send-btn { width: 108px; height: 54px; background: #0b57d0; color: #fff; font-size: 21px; font-weight: 500; border-radius: 27px 0 0 27px; }
.send-more { width: 49px; height: 54px; background: #0b57d0; border-left: 1px solid #0a3b8a; border-radius: 0 27px 27px 0; display: flex; align-items: center; justify-content: center; color: #fff; }
.send-more svg { width: 12px; height: 7px; transform: translateX(-2px); }
.fi { width: 48px; height: 48px; display: flex; align-items: center; justify-content: center; color: #444746; position: relative; flex: none; }
.fi-first { margin-left: 9px; }
.f-ic { width: 28px; height: 28px; }
.blue-dot { position: absolute; width: 9px; height: 9px; background: #1a73e8; border-radius: 50%; top: 3px; left: 33px; }
.fi-trash { margin-left: auto; }

.scroll { width: 17px; flex: none; padding-top: 178px; }
.thumb { width: 17px; height: 383px; background: #cbcbcb; border-left: 1px solid #bdbdbd; }

.rail { flex: 1; display: flex; flex-direction: column; align-items: center; padding-bottom: 28px; }
.rail-slot { height: 84px; display: flex; align-items: center; justify-content: center; flex: none; }
.rail-ic { width: 28px; height: 28px; }
.cal-num { font-family: Roboto, sans-serif; font-size: 11px; font-weight: 500; fill: #4285f4; text-anchor: middle; }
.rail-sep { width: 30px; height: 1px; background: #e1e3e6; margin-top: 25px; flex: none; }
.rail-plus { width: 24px; height: 24px; margin-top: 53px; }
.rail-chev { width: 28px; height: 28px; margin-top: auto; color: #1f1f1f; }

/* taskbar */
.taskbar { height: 71px; flex: none; border-top: 2px solid #3a3d42; background: linear-gradient(90deg, #1c2126 0, #1c2126 14%, #13224a 30%, #13224a 62%, #1c2127 74%, #1c2127 100%); display: flex; align-items: center; color: #fff; }
.weather { width: 445px; display: flex; align-items: center; padding-left: 28px; flex: none; height: 100%; }
.w-ic { position: relative; width: 48px; height: 48px; }
.w-cloud { width: 40px; height: 44px; margin-top: 2px; }
.w-badge { position: absolute; left: 19px; top: -4px; width: 24px; height: 24px; border-radius: 50%; background: #ff9ca6; color: #1b1b1b; font-size: 15px; display: flex; align-items: center; justify-content: center; }
.w-text { display: flex; flex-direction: column; font-size: 18px; line-height: 24px; }
.w-sum { color: #cfd2d6; }
.tb-win { width: 36px; height: 36px; margin-right: 21px; }
.tb-search { width: 328px; height: 48px; border-radius: 24px; background: #3b4566; border: 1px solid #4d5678; display: flex; align-items: center; padding: 0 12px 0 18px; color: #d9dce3; }
.tb-lens { width: 26px; height: 26px; }
.tb-search-text { flex: 1; font-size: 21px; margin-left: 11px; color: #d3d6de; }
.tb-doodle { width: 74px; height: 46px; }
.apps { display: flex; margin-left: 4px; }
.app { width: 66px; height: 60px; display: flex; align-items: center; justify-content: center; position: relative; flex: none; }
.app-ic { width: 36px; height: 36px; }
.app-active { background: #2a3453; border-radius: 6px; width: 60px; margin: 0 3px; }
.app:not(.app-active):not(:nth-child(1)):not(:nth-child(2)):not(:nth-child(3))::after { content: ""; position: absolute; bottom: 1px; left: 30px; width: 6px; height: 6px; border-radius: 50%; background: #9a9ea6; }
.active-bar { position: absolute; bottom: 1px; left: 18px; width: 24px; height: 5px; border-radius: 3px; background: #47b9f5; }
.tray { flex: 1; display: flex; align-items: center; font-size: 18px; min-width: 0; }
.tr-up { width: 22px; height: 22px; margin-left: 100px; }
.tr-lang { display: flex; flex-direction: column; align-items: center; line-height: 24px; margin-left: 24px; width: 44px; }
.tr-ic { width: 26px; height: 26px; }
.wifi { margin-left: 22px; }
.vol { margin-left: 10px; }
.batt { margin-left: 10px; }
.tr-clock { display: flex; flex-direction: column; align-items: flex-end; line-height: 24px; margin-left: 25px; width: 92px; white-space: nowrap; letter-spacing: .15px; }
.tr-bell { width: 24px; height: 26px; margin-left: 10px; }
.zz { font-size: 8px; font-weight: 700; font-family: Roboto, sans-serif; fill: currentColor; }
.ol { font-size: 15px; font-weight: 700; fill: #fff; text-anchor: middle; font-family: Roboto, sans-serif; }
```
